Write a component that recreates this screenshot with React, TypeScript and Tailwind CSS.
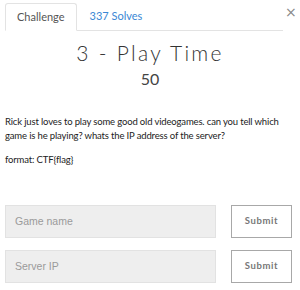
export default function App() {
  return (
    <div className="w-[300px] h-[290px] bg-white font-['Lato',sans-serif] overflow-hidden">
      <div className="flex items-start pl-[5px] pt-[3px]">
        <div className="w-[278px] flex border-b border-[#e3e3e3]">
          <div className="-mb-px h-[28px] px-[11px] flex items-center text-[11px] text-[#555] bg-white border border-[#e3e3e3] border-b-white rounded-t-[3px]">
            Challenge
          </div>
          <div className="h-[27px] px-[13px] flex items-center text-[11px] text-[#3a87d4]">
            337 Solves
          </div>
        </div>
        <button className="ml-[2px] mt-[2px] w-[10px] text-[14px] leading-[14px] text-[#888] font-['DejaVu_Sans',sans-serif]">
          ×
        </button>
      </div>

      <div className="text-center text-[#333]">
        <h3 className="mt-[10px] text-[21px] leading-[24px] font-light tracking-[2.3px]">3 - Play Time</h3>
        <h4 className="mt-[5px] text-[16px] leading-[18px] font-normal text-[#444]">50</h4>
      </div>

      <div className="px-[5px] mt-[27px] text-[9.5px] leading-[13.5px] tracking-[-0.15px] text-[#222]">
        <p>
          Rick just loves to play some good old videogames. can you tell which game is he playing? whats the IP
          address of the server?
        </p>
        <p className="mt-[11px]">format: CTF{'{'}flag{'}'}</p>
      </div>

      <div className="px-[5px] mt-[38px] flex flex-col gap-[12px]">
        {['Game name', 'Server IP'].map((ph) => (
          <div key={ph} className="flex items-center">
            <input
              placeholder={ph}
              className="w-[211px] h-[33px] px-[9px] bg-[#eeeeee] border border-[#e2e2e2] text-[10.5px] font-['Liberation_Sans',sans-serif] placeholder-[#9a9a9a] outline-none"
            />
            <button className="ml-[15px] w-[61px] h-[33px] border border-[#a8a8a8] bg-white text-[9.5px] font-bold tracking-[0.6px] text-[#777]">
              Submit
            </button>
          </div>
        ))}
      </div>
    </div>
  );
}
